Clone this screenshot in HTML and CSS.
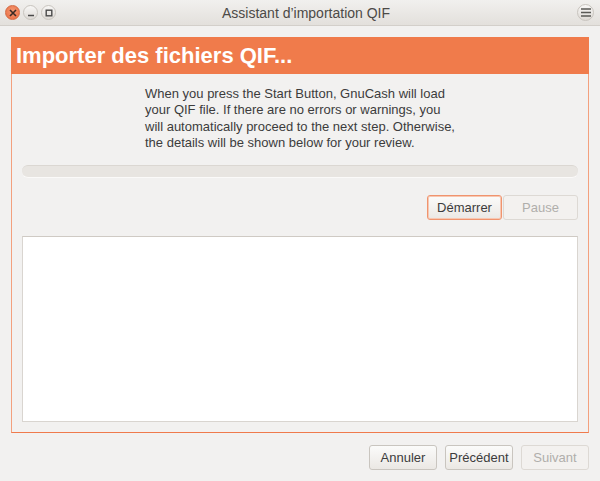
FILE: index.html
```html
<!DOCTYPE html>
<html>
<head>
<title>Assistant d'importation QIF</title>
<link rel="stylesheet" href="styles.css">
</head>
<body>
  <div class="titlebar">
    <div class="wm-buttons">
      <span class="wm-btn wm-close">
        <svg width="8" height="8" viewBox="0 0 8 8"><path d="M1 1L7 7M7 1L1 7" stroke="#3a2a24" stroke-width="1.6"/></svg>
      </span>
      <span class="wm-btn">
        <svg width="8" height="8" viewBox="0 0 8 8"><path d="M1 6.5H7" stroke="#4a4a4a" stroke-width="1.5"/></svg>
      </span>
      <span class="wm-btn">
        <svg width="8" height="8" viewBox="0 0 8 8"><rect x="1.2" y="1.2" width="5.6" height="5.6" fill="none" stroke="#4a4a4a" stroke-width="1.4"/></svg>
      </span>
    </div>
    <div class="title">Assistant d’importation QIF</div>
    <span class="wm-btn wm-menu">
      <svg width="10" height="9" viewBox="0 0 10 9"><path d="M0 1H10M0 4.5H10M0 8H10" stroke="#5a5955" stroke-width="1.6"/></svg>
    </span>
  </div>

  <div class="page">
    <div class="frame">
      <div class="header">Importer des fichiers QIF...</div>
      <div class="body">
        <p class="intro">When you press the Start Button, GnuCash will load your QIF file. If there are no errors or warnings, you will automatically proceed to the next step. Otherwise, the details will be shown below for your review.</p>
        <div class="progress"></div>
        <div class="actions">
          <button class="btn btn-focus">Démarrer</button>
          <button class="btn btn-off">Pause</button>
        </div>
        <div class="log"></div>
      </div>
    </div>

    <div class="footer">
      <button class="btn">Annuler</button>
      <button class="btn">Précédent</button>
      <button class="btn btn-off">Suivant</button>
    </div>
  </div>
</body>
</html>
```

FILE: styles.css
```css
body {
  margin: 0;
  background: #f2f1f0;
  font-family: "Liberation Sans", Arial, sans-serif;
  font-size: 13px;
  color: #3c3c3c;
}
.titlebar {
  height: 25px;
  display: flex;
  align-items: center;
  padding: 0 5px 0 5px;
  background: linear-gradient(#f1f0ee, #e3e0dc);
  border-bottom: 1px solid #d3cfca;
  position: relative;
}
.wm-buttons {
  display: flex;
  gap: 3px;
}
.wm-btn {
  width: 13px;
  height: 13px;
  border-radius: 50%;
  border: 1px solid #c8c4be;
  background: linear-gradient(#f8f7f6, #dedad5);
  display: flex;
  align-items: center;
  justify-content: center;
}
.wm-close {
  background: radial-gradient(circle at 50% 40%, #f49a74, #e9683c);
  border-color: #d36a43;
}
.wm-menu {
  width: 15px;
  height: 15px;
  margin-left: auto;
  margin-right: 1px;
}
.title {
  position: absolute;
  left: 0;
  right: 0;
  text-align: center;
  font-size: 14px;
  color: #4c4a47;
  pointer-events: none;
  padding-left: 12px;
  padding-top: 1px;
}
.page {
  padding: 11px 11px 0 11px;
}
.frame {
  border-left: 1px solid #f3a07e;
  border-right: 1px solid #f3a07e;
  border-bottom: 1px solid #ef7a4c;
  height: 395px;
  display: flex;
  flex-direction: column;
}
.header {
  background: #f07b4b;
  color: #fff;
  font-weight: bold;
  font-size: 22px;
  height: 37px;
  line-height: 38px;
  padding-left: 5px;
  margin: 0 -1px;
}
.body {
  flex: 1;
  display: flex;
  flex-direction: column;
  padding: 0 10px 10px 10px;
}
.intro {
  margin: 12px 0 0 123px;
  width: 314px;
  line-height: 16.3px;
}
.progress {
  margin-top: 14px;
  height: 11px;
  border-radius: 6px;
  background: #e8e5e1;
  border-top: 1px solid #dbd7d2;
  border-bottom: 1px solid #fbfaf9;
}
.actions {
  display: flex;
  justify-content: flex-end;
  gap: 1px;
  margin-top: 17px;
}
.actions .btn {
  width: 75px;
}
.btn {
  font-family: "Liberation Sans", Arial, sans-serif;
  font-size: 13px;
  color: #3c3c3c;
  height: 25px;
  width: 68px;
  padding: 0;
  border: 1px solid #c9c5bf;
  border-radius: 3px;
  background: linear-gradient(#fbfbfa, #ebe8e4);
}
.btn-focus {
  border-color: #f0946e;
  box-shadow: inset 0 0 0 1px #f7c7b2;
}
.btn-off {
  color: #b0aeab;
  border-color: #ddd9d4;
  background: #f3f1ef;
}
.log {
  flex: 1;
  margin-top: 16px;
  background: #fff;
  border: 1px solid #d9d5d0;
  border-top-color: #cfcac4;
}
.footer {
  display: flex;
  justify-content: flex-end;
  gap: 8px;
  margin-top: 12px;
}
```
